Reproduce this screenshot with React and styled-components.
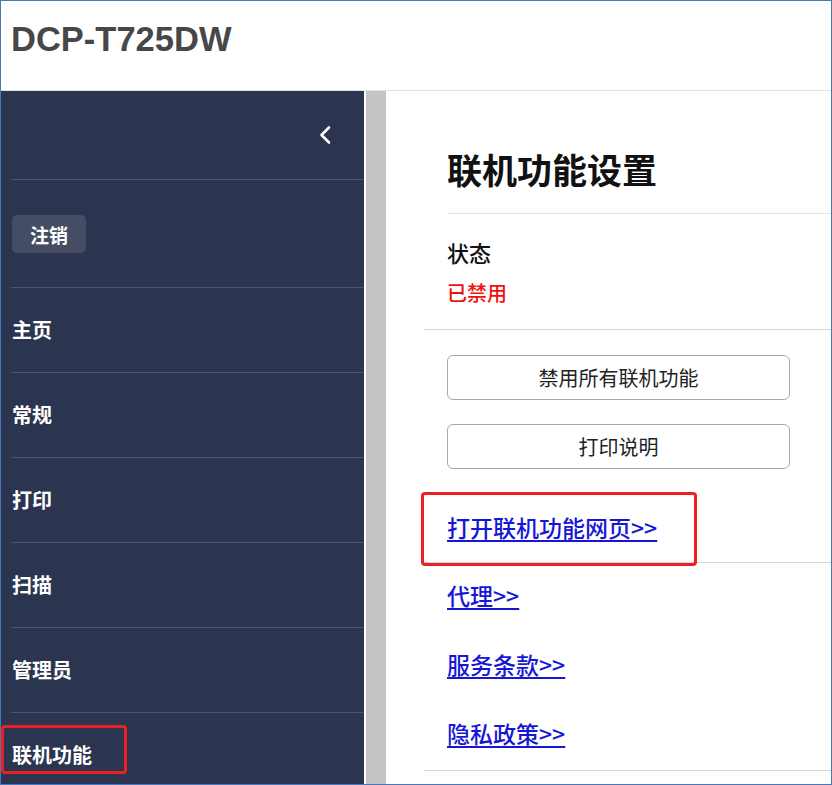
import React from "react";
import styled, { createGlobalStyle } from "styled-components";

const GlobalStyle = createGlobalStyle`
  html, body { margin: 0; padding: 0; background: #fff; }
  body { font-family: "Noto Sans CJK SC", "Noto Sans", sans-serif; }
  * { box-sizing: border-box; }
`;

const Frame = styled.div`
  width: 832px;
  height: 785px;
  border: 1px solid #4a78bd;
  display: flex;
  flex-direction: column;
  overflow: hidden;
  background: #fff;
`;

const Header = styled.header`
  height: 90px;
  flex: none;
  border-bottom: 1px solid #e2e2e2;
  padding: 18px 0 0 10px;
`;

const Model = styled.h1`
  margin: 0;
  font-family: "Liberation Sans", Arial, sans-serif;
  font-weight: 700;
  font-size: 34.5px;
  line-height: 40px;
  color: #474747;
`;

const Body = styled.div`
  flex: 1;
  display: flex;
  min-height: 0;
`;

const Sidebar = styled.nav`
  width: 363px;
  flex: none;
  background: #2c3550;
  display: flex;
  flex-direction: column;
  overflow: hidden;
`;

const CollapseRow = styled.div`
  height: 88px;
  flex: none;
  display: flex;
  align-items: center;
  justify-content: flex-end;
  padding-right: 32px;
`;

const SideSection = styled.div`
  margin-left: 10px;
  border-top: 1px solid #4a5470;
  flex: none;
`;

const LogoutSection = styled(SideSection)`
  padding: 35px 0 34px 1px;
`;

const LogoutButton = styled.button`
  width: 74px;
  height: 38px;
  border: none;
  border-radius: 5px;
  background: #454d64;
  color: #fff;
  font-family: inherit;
  font-size: 19px;
  font-weight: 600;
  padding: 0;
  cursor: pointer;
`;

const NavItem = styled(SideSection)`
  height: 85px;
  display: flex;
  align-items: center;
  padding-left: 1px;
  color: #fff;
  font-size: 20px;
  font-weight: 700;
  line-height: 28px;
`;

const Annotated = styled.span`
  position: relative;
  display: inline-block;
  &::after {
    content: "";
    position: absolute;
    top: ${(p) => p.$t}px;
    right: ${(p) => p.$r}px;
    bottom: ${(p) => p.$b}px;
    left: ${(p) => p.$l}px;
    border: 3px solid #ec2020;
    border-radius: 4px;
    pointer-events: none;
  }
`;

const Gutter = styled.div`
  width: 23px;
  flex: none;
  display: flex;
  background: #fff;
  &::after {
    content: "";
    margin-left: 2px;
    width: 20px;
    background: #c4c4c4;
  }
`;

const Main = styled.main`
  flex: 1;
  padding-left: 37px;
  display: flex;
  flex-direction: column;
  overflow: hidden;
`;

const Title = styled.h2`
  margin: 0 0 0 23px;
  padding: 58px 0 24px;
  border-bottom: 1px solid #e4e4e4;
  font-size: 35px;
  line-height: 40px;
  font-weight: 700;
  color: #111;
`;

const Section = styled.section`
  padding-left: 23px;
  border-bottom: 1px solid #d8d8d8;
  display: flex;
  flex-direction: column;
  align-items: flex-start;
`;

const StatusSection = styled(Section)`
  padding-top: 23px;
  padding-bottom: 23px;
`;

const Label = styled.div`
  font-size: 22px;
  line-height: 30px;
  font-weight: 500;
  color: #111;
`;

const Disabled = styled.div`
  margin-top: 13px;
  font-size: 20px;
  line-height: 26px;
  font-weight: 500;
  color: #f01010;
`;

const ActionSection = styled(Section)`
  padding-top: 25px;
  padding-bottom: 20px;
`;

const OutlineButton = styled.button`
  width: 343px;
  height: 45px;
  margin-bottom: ${(p) => p.$gap}px;
  border: 1.5px solid #a8a8a8;
  border-radius: 6px;
  background: #fff;
  color: #222;
  font-family: inherit;
  font-size: 20px;
  cursor: pointer;
`;

const Link = styled.a`
  display: inline-block;
  font-size: 23px;
  line-height: 30px;
  font-weight: 500;
  color: #1616d6;
  text-decoration: underline;
  text-underline-offset: 3px;
  cursor: pointer;
`;

const LinkSection = styled(Section)`
  padding-top: 17px;
  padding-bottom: 22px;
  gap: 39px;
`;

const Chevron = () => (
  <svg width="14" height="20" viewBox="0 0 14 20" aria-hidden="true">
    <polyline
      points="11,2.5 3.5,10 11,17.5"
      fill="none"
      stroke="#fff"
      strokeWidth="2.6"
      strokeLinecap="round"
      strokeLinejoin="round"
    />
  </svg>
);

const navItems = ["主页", "常规", "打印", "扫描", "管理员"];

export default function App() {
  return (
    <>
      <GlobalStyle />
      <Frame>
        <Header>
          <Model>DCP-T725DW</Model>
        </Header>
        <Body>
          <Sidebar>
            <CollapseRow>
              <Chevron />
            </CollapseRow>
            <LogoutSection>
              <LogoutButton>注销</LogoutButton>
            </LogoutSection>
            {navItems.map((n) => (
              <NavItem key={n}>{n}</NavItem>
            ))}
            <NavItem>
              <Annotated $t={-16} $r={-35} $b={-5} $l={-11}>
                联机功能
              </Annotated>
            </NavItem>
          </Sidebar>
          <Gutter />
          <Main>
            <Title>联机功能设置</Title>
            <StatusSection>
              <Label>状态</Label>
              <Disabled>已禁用</Disabled>
            </StatusSection>
            <ActionSection>
              <OutlineButton $gap={24}>禁用所有联机功能</OutlineButton>
              <OutlineButton $gap={43}>打印说明</OutlineButton>
              <Annotated $t={-20} $r={-40} $b={-24} $l={-26}>
                <Link>打开联机功能网页&gt;&gt;</Link>
              </Annotated>
            </ActionSection>
            <LinkSection>
              <Link>代理&gt;&gt;</Link>
              <Link>服务条款&gt;&gt;</Link>
              <Link>隐私政策&gt;&gt;</Link>
            </LinkSection>
          </Main>
        </Body>
      </Frame>
    </>
  );
}
